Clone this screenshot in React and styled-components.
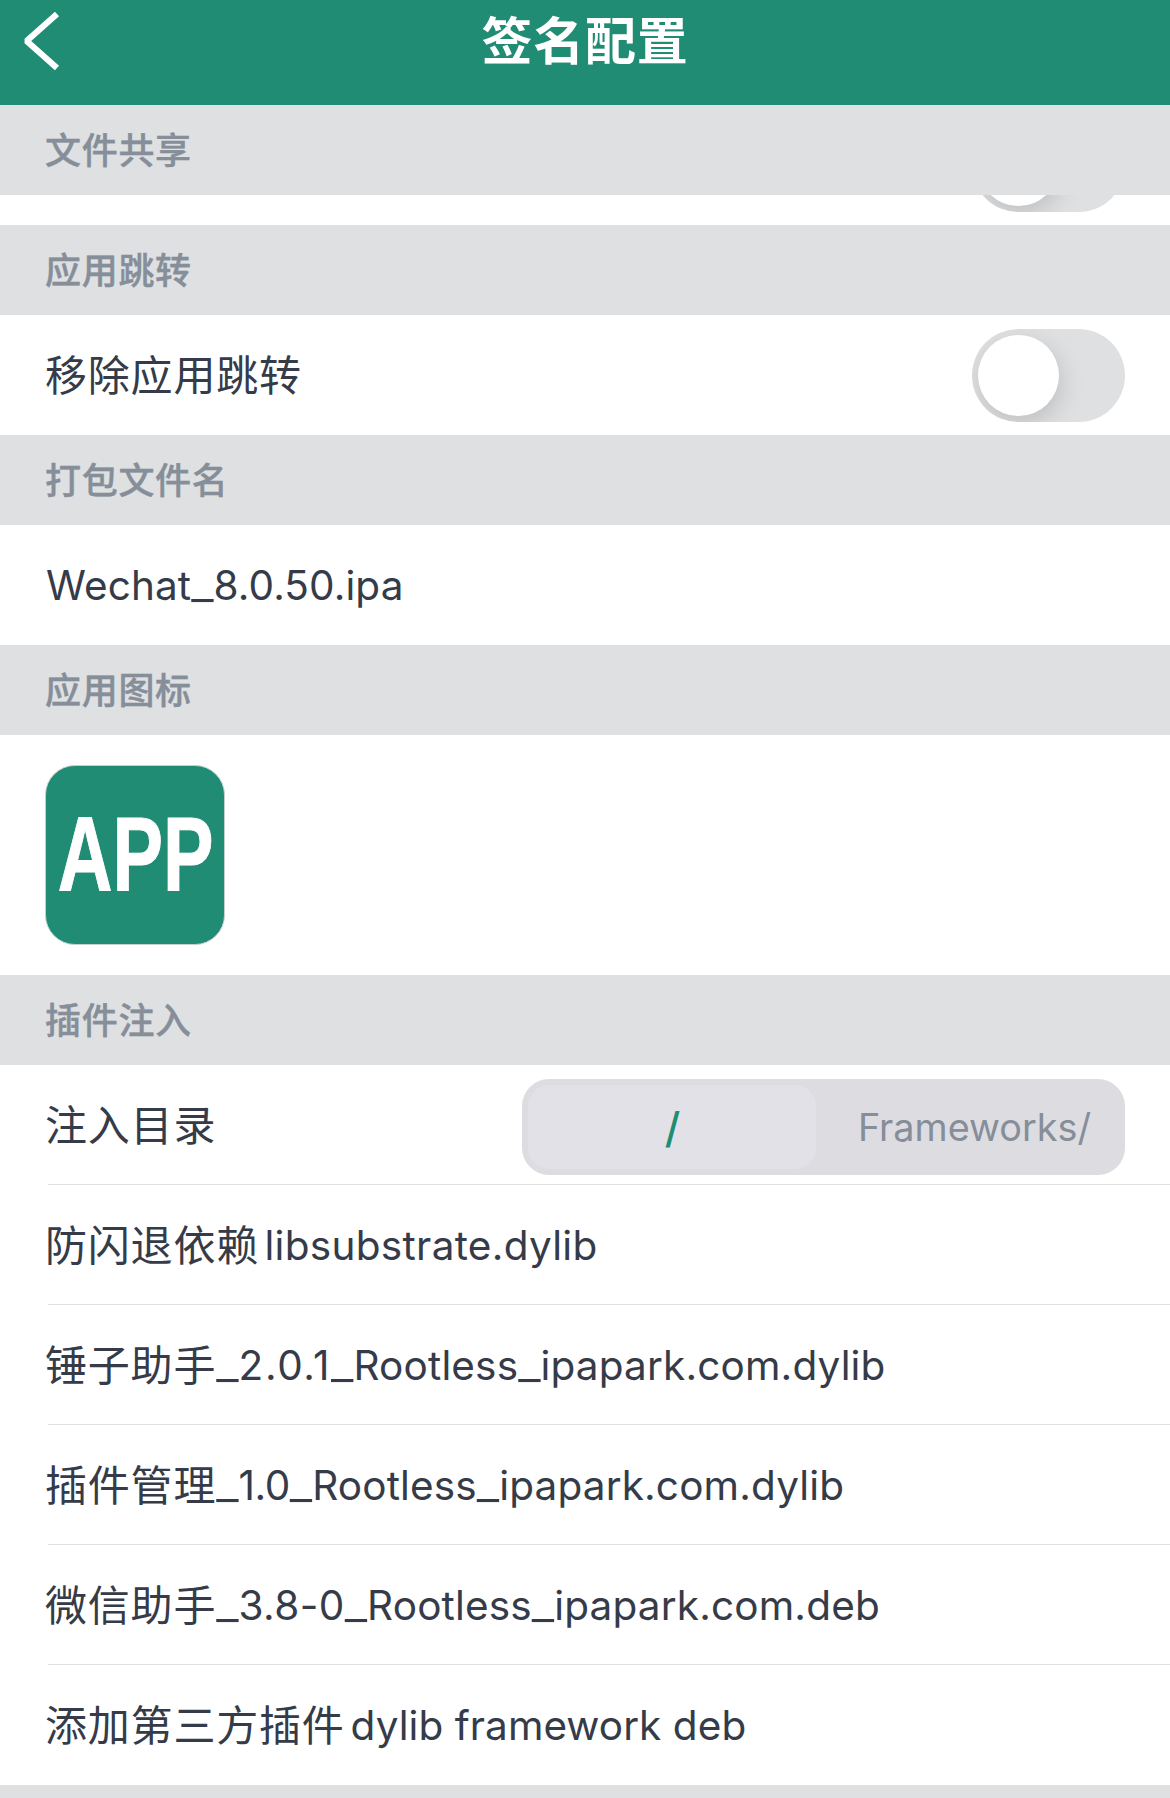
import React from 'react';
import styled, { createGlobalStyle } from 'styled-components';

const GlobalStyle = createGlobalStyle`
  * {
    box-sizing: border-box;
  }

  body {
    margin: 0;
    background-color: #ffffff;
    font-family: 'Noto Sans CJK SC', sans-serif;
    color: #353b48;
  }
`;

const Page = styled.div`
  display: flex;
  flex-direction: column;
  height: 1798px;
  overflow: hidden;
  background-color: #ffffff;
`;

// Header
const NavBar = styled.header`
  flex: none;
  display: grid;
  grid-template-columns: 200px 1fr 200px;
  height: 105px;
  background-color: #218c74;
`;

const BackButton = styled.button`
  display: flex;
  align-items: flex-start;
  padding: 10px 0 0 22px;
  border: 0;
  background: none;
`;

const NavTitle = styled.h1`
  margin: 0;
  font-size: 51px;
  font-weight: 700;
  line-height: 77px;
  letter-spacing: 0.7px;
  text-align: center;
  color: #ffffff;
`;

// Lists
const SectionHeader = styled.h2`
  flex: none;
  height: 90px;
  margin: 0;
  padding-left: 45px;
  background-color: #dee0e2;
  color: #858e99;
  font-size: 36px;
  font-weight: 500;
  line-height: 86px;
  letter-spacing: 0.7px;
  -webkit-text-stroke: 0.4px #858e99;
`;

const Row = styled.div`
  flex: none;
  display: flex;
  align-items: center;
  justify-content: space-between;
  height: ${(props) => props.$height || 120}px;
  padding: 0 45px;
`;

const ClippedRow = styled(Row)`
  align-items: flex-end;
  justify-content: flex-end;
  padding-bottom: 13px;
  overflow: hidden;
`;

const List = styled.div`
  flex: none;

  ${Row} + ${Row} {
    background: linear-gradient(#dee0e2, #dee0e2) 48px 0 / 100% 1px no-repeat;
    margin-top: -1px;
    height: 121px;
    padding-top: 1px;
  }
`;

const Label = styled.span`
  padding-bottom: 4px;
  font-size: 42px;
  line-height: 118px;
  letter-spacing: 0.8px;
  white-space: pre;
`;

const Latin = styled.span`
  font-family: Inter, sans-serif;
  font-size: 40.5px;
  line-height: 0;
  vertical-align: 1px;
  letter-spacing: ${(props) => props.$spacing || 0}px;
  margin-left: ${(props) => props.$gap || 0}px;
`;

const Version = styled.span`
  letter-spacing: ${(props) => props.$spacing}px;
`;

const Underscore = styled.span`
  font-size: 50px;
  font-weight: 350;
  line-height: 0;
  letter-spacing: 0;
  vertical-align: 1px;
`;

// Switch
const Track = styled.div`
  flex: none;
  width: 153px;
  height: 93px;
  padding: 6px;
  border-radius: 47px;
  background-color: #dee0e2;
  overflow: hidden;
`;

const Knob = styled.div`
  width: 81px;
  height: 81px;
  border-radius: 50%;
  background-color: #ffffff;
  box-shadow: 2px 8px 24px rgba(0, 0, 0, 0.15);
`;

// Segmented control
const Segments = styled.div`
  display: flex;
  width: 603px;
  height: 96px;
  margin-top: 4px;
  padding: 6px;
  border-radius: 27px;
  background-color: #dddce1;
`;

const Segment = styled.div`
  flex: ${(props) => (props.$active ? '0 0 288px' : '1')};
  padding-left: ${(props) => (props.$active ? 1 : 14)}px;
  border-radius: 21px;
  background-color: ${(props) => (props.$active ? '#e2e1e7' : 'transparent')};
  color: ${(props) => (props.$active ? '#218c74' : '#858e99')};
  font-family: Inter, sans-serif;
  font-size: ${(props) => (props.$active ? 42 : 37.8)}px;
  font-weight: ${(props) => (props.$active ? 500 : 400)};
  line-height: ${(props) => (props.$active ? 86 : 84)}px;
  text-align: center;
`;

const AppIcon = styled.div`
  width: 180px;
  height: 180px;
  border: 1px solid #c4d0ce;
  border-radius: 30px;
  background-color: #218c74;
`;

const plugins = [
  { name: '防闪退依赖', file: 'libsubstrate.dylib', gap: 5.5, spacing: 0.3 },
  { name: '锤子助手', file: '_2.0.1_Rootless_ipapark.com.dylib', spacing: 0.15, version: 1.6 },
  { name: '插件管理', file: '_1.0_Rootless_ipapark.com.dylib', spacing: 0.15, version: -0.5 },
  { name: '微信助手', file: '_3.8-0_Rootless_ipapark.com.deb', spacing: 0.16, version: 0.4 },
  { name: '添加第三方插件', file: 'dylib framework deb', gap: 6, spacing: 0.06 },
];

const Switch = () => (
  <Track>
    <Knob />
  </Track>
);

const FileName = ({ children, gap, spacing, version = 0 }) => (
  <Latin $gap={gap} $spacing={spacing}>
    {children.split(/(_)/).map((part, i) => {
      if (part === '_') return <Underscore key={i}>_</Underscore>;
      if (/^\d/.test(part)) return <Version key={i} $spacing={version}>{part}</Version>;
      return part;
    })}
  </Latin>
);

const App = () => {
  return (
    <Page>
      <GlobalStyle />
      <NavBar>
        <BackButton aria-label="返回">
          <svg width="40" height="62" viewBox="0 0 40 62" fill="none">
            <path d="M35 4L4.6 31L35 58" stroke="#fff" strokeWidth="6.2" strokeLinejoin="bevel" />
          </svg>
        </BackButton>
        <NavTitle>签名配置</NavTitle>
      </NavBar>

      <SectionHeader>文件共享</SectionHeader>
      <ClippedRow $height={30}>
        <Switch />
      </ClippedRow>

      <SectionHeader>应用跳转</SectionHeader>
      <Row>
        <Label>移除应用跳转</Label>
        <Switch />
      </Row>

      <SectionHeader>打包文件名</SectionHeader>
      <Row>
        <Label>
          <FileName gap={1} spacing={0.1} version={0.1}>Wechat_8.0.50.ipa</FileName>
        </Label>
      </Row>

      <SectionHeader>应用图标</SectionHeader>
      <Row $height={240}>
        <AppIcon>
          <svg width="178" height="178" viewBox="0 0 178 178">
            <text
              transform="translate(11.8 125) scale(0.715 1)"
              fill="#fff"
              stroke="#fff"
              fontFamily="Liberation Sans"
              fontWeight="700"
              fontSize="106"
            >
              APP
            </text>
          </svg>
        </AppIcon>
      </Row>

      <SectionHeader>插件注入</SectionHeader>
      <List>
        <Row>
          <Label>注入目录</Label>
          <Segments>
            <Segment $active>/</Segment>
            <Segment>Frameworks/</Segment>
          </Segments>
        </Row>
        {plugins.map(({ name, file, gap, spacing, version }) => (
          <Row key={name}>
            <Label>
              {name}
              <FileName gap={gap} spacing={spacing} version={version}>{file}</FileName>
            </Label>
          </Row>
        ))}
      </List>

      <SectionHeader />
    </Page>
  );
};

export default App;
